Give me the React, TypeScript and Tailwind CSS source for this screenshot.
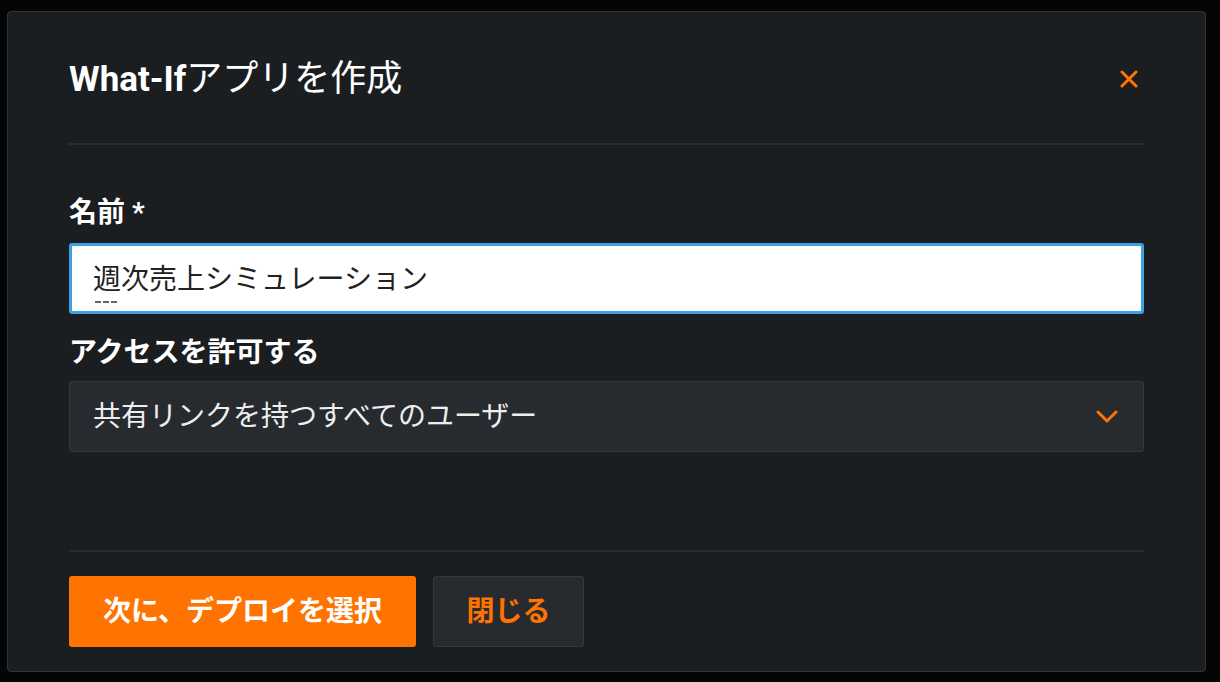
export default function App() {
    const font = { fontFamily: 'Roboto, "Noto Sans CJK JP", sans-serif' };
    return (
        <div className="w-[1220px] h-[682px] bg-[#050505] pt-[11px] pl-[7px]" style={font}>
            <div className="w-[1199px] h-[661px] bg-[#1b1e21] border border-[#30353a] rounded-[4px] px-[61px] flex flex-col">
                {/* header */}
                <div className="h-[133px] pt-[3px] flex items-center justify-between border-b-2 border-[#2a2e32]">
                    <h1 className="text-[36px] leading-[44px] text-white">
                        <span className="font-bold text-[35px]">What-If</span>アプリを作成
                    </h1>
                    <svg width="18" height="18" viewBox="0 0 18 18" className="mr-[6px]">
                        <path d="M2 2 L16 16 M16 2 L2 16" stroke="#ff7300" strokeWidth="3" strokeLinecap="round" />
                    </svg>
                </div>

                {/* body */}
                <div className="flex-1 flex flex-col">
                    <label className="mt-[50px] text-[28px] leading-[36px] font-bold text-white">名前 *</label>
                    <div className="mt-[12px] h-[71px] bg-white border-[3px] border-[#3ea1e6] rounded-[3px] pl-[21px] pt-[3px] flex items-center text-[28px] text-[#222]">
                        <span className="relative">
                            週
                            <span className="absolute left-[2px] bottom-[-2px] w-[22px] border-b-2 border-dashed border-[#666]" />
                        </span>
                        次売上シミュレーション
                    </div>
                    <label className="mt-[21px] text-[28px] leading-[36px] font-bold text-white">アクセスを許可する</label>
                    <div className="mt-[10px] h-[71px] bg-[#272b2f] border border-[#33383c] rounded-[3px] pl-[23px] pr-[25px] flex items-center justify-between text-[28px] text-[#eeeeee]">
                        <span>共有リンクを持つすべてのユーザー</span>
                        <svg width="22" height="14" viewBox="0 0 22 14">
                            <path d="M2 2 L11 11 L20 2" fill="none" stroke="#ff7300" strokeWidth="3" strokeLinecap="round" strokeLinejoin="round" />
                        </svg>
                    </div>
                </div>

                {/* footer */}
                <div className="border-t-2 border-[#2a2e32] pt-[24px] pb-[24px] flex gap-[17px]">
                    <button className="w-[347px] h-[71px] bg-[#ff7300] rounded-[3px] text-white text-[28px] font-bold">
                        次に、デプロイを選択
                    </button>
                    <button className="w-[151px] h-[71px] bg-[#272b2f] border border-[#34393e] rounded-[3px] text-[#ff7300] text-[28px] font-bold">
                        閉じる
                    </button>
                </div>
            </div>
        </div>
    );
}
